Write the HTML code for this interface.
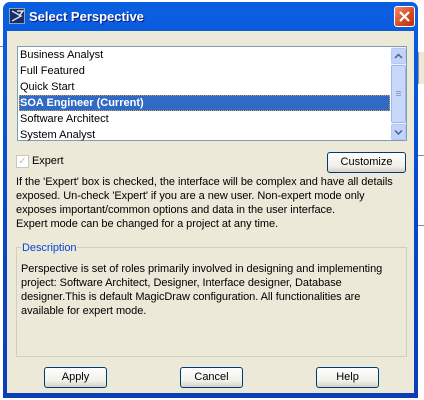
<!DOCTYPE html>
<html><head><style>
*{margin:0;padding:0;box-sizing:border-box}
body{width:424px;height:400px;background:#fff;position:relative;overflow:hidden;font-family:"Liberation Sans",Arial,sans-serif;font-size:11px;color:#000}
.a{position:absolute}
#win{left:3px;top:2px;width:415px;height:396px;background:linear-gradient(#0a5fe0,#0746c8 60%,#0a3fb8);border-radius:7px 7px 0 0}
#body{left:7px;top:31px;width:407px;height:362px;background:#ece9d8}
.btn{position:absolute;height:21px;border:1px solid #003c74;border-radius:3px;background:linear-gradient(#fff,#f0efe8 70%,#d6d0c5);text-align:center;line-height:19px;font-size:11px}
.row{position:absolute;left:1px;height:16px;line-height:16px;padding-left:1px;width:371px}
.t{position:absolute;white-space:nowrap;font-size:11px;line-height:14px;letter-spacing:-0.05px}
</style></head><body>
<div class="a" style="left:0;top:46px;width:3px;height:1px;background:#888"></div>
<div class="a" style="left:418px;top:52px;width:6px;height:32px;border-left:1px solid #999;background:#ece9d8"></div>
<div class="a" style="left:418px;top:155px;width:6px;height:1px;background:#888"></div>
<div class="a" style="left:418px;top:225px;width:6px;height:1px;background:#888"></div>
<div class="a" id="win"></div>
<div class="a" style="left:9px;top:8px;width:16px;height:16px;background:#1a2a6a;border:1px solid #8aa;"></div>
<svg class="a" style="left:9px;top:8px" width="16" height="16"><path d="M3 3 L12 8 L3 13 M8 3 L14 3 L10 8" stroke="#dde" stroke-width="1.5" fill="none"/></svg>
<div class="a" style="left:29px;top:8px;color:#fff;font-weight:bold;font-size:13px;line-height:18px;text-shadow:1px 1px #0a1e7a">Select Perspective</div>
<div class="a" style="left:394px;top:6px;width:21px;height:21px;border:1px solid #fff;border-radius:3px;background:linear-gradient(135deg,#f08a6a,#d24a24 60%,#b83010)"></div>
<svg class="a" style="left:394px;top:6px" width="21" height="21"><path d="M6 6 L15 15 M15 6 L6 15" stroke="#fff" stroke-width="2.2"/></svg>
<div class="a" id="body"></div>
<div class="a" style="left:17px;top:46px;width:390px;height:95px;background:#fff;border:1px solid #7f9db9">
 <div class="row" style="top:0">Business Analyst</div>
 <div class="row" style="top:16px">Full Featured</div>
 <div class="row" style="top:32px">Quick Start</div>
 <div class="row" style="top:48px;background:#316ac5;color:#fff;font-weight:bold;outline:1px dotted #d0a040;outline-offset:-1px">SOA Engineer (Current)</div>
 <div class="row" style="top:64px">Software Architect</div>
 <div class="row" style="top:80px">System Analyst</div>
 <div class="a" style="left:373px;top:0;width:15px;height:93px;background:#f3f1ec"></div>
 <div class="a" style="left:373px;top:1px;width:15px;height:16px;background:#c1d3fb;border:1px solid #b4c8f6;border-radius:2px"></div>
 <svg class="a" style="left:373px;top:1px" width="15" height="16"><path d="M4 10 L7.5 6.5 L11 10" stroke="#4d6185" stroke-width="1.5" fill="none"/></svg>
 <div class="a" style="left:373px;top:18px;width:15px;height:58px;background:#c8d8fb;border:1px solid #9db6f0;border-radius:2px"></div>
 <svg class="a" style="left:373px;top:18px" width="15" height="58"><path d="M5 26.5h5M5 28.5h5M5 30.5h5" stroke="#8ca0c8" stroke-width="1"/></svg>
 <div class="a" style="left:373px;top:77px;width:15px;height:16px;background:#c1d3fb;border:1px solid #b4c8f6;border-radius:2px"></div>
 <svg class="a" style="left:373px;top:77px" width="15" height="16"><path d="M4 6.5 L7.5 10 L11 6.5" stroke="#4d6185" stroke-width="1.5" fill="none"/></svg>
</div>
<div class="a" style="left:16px;top:155px;width:13px;height:13px;border:1px solid #cac8bb;background:#fff;color:#c0bfb5;font-size:10px;line-height:11px;text-align:center">✓</div>
<div class="t" style="left:32px;top:154px">Expert</div>
<div class="btn" style="left:327px;top:152px;width:79px">Customize</div>
<div class="t" style="left:16px;top:175px">If the 'Expert' box is checked, the interface will be complex and have all details</div>
<div class="t" style="left:16px;top:189px">exposed. Un-check 'Expert' if you are a new user. Non-expert mode only</div>
<div class="t" style="left:16px;top:203px">exposes important/common options and data in the user interface.</div>
<div class="t" style="left:16px;top:217px">Expert mode can be changed for a project at any time.</div>
<div class="a" style="left:16px;top:247px;width:391px;height:110px;border:1px solid #d0d0bf"></div>
<div class="t" style="left:21px;top:241px;color:#0046d5;background:#ece9d8;padding:0 1px">Description</div>
<div class="t" style="left:21px;top:262px">Perspective is set of roles primarily involved in designing and implementing</div>
<div class="t" style="left:21px;top:276px">project: Software Architect, Designer, Interface designer, Database</div>
<div class="t" style="left:21px;top:290px">designer.This is default MagicDraw configuration. All functionalities are</div>
<div class="t" style="left:21px;top:304px">available for expert mode.</div>
<div class="btn" style="left:44px;top:367px;width:63px">Apply</div>
<div class="btn" style="left:180px;top:367px;width:63px">Cancel</div>
<div class="btn" style="left:316px;top:367px;width:63px">Help</div>
</body></html>
